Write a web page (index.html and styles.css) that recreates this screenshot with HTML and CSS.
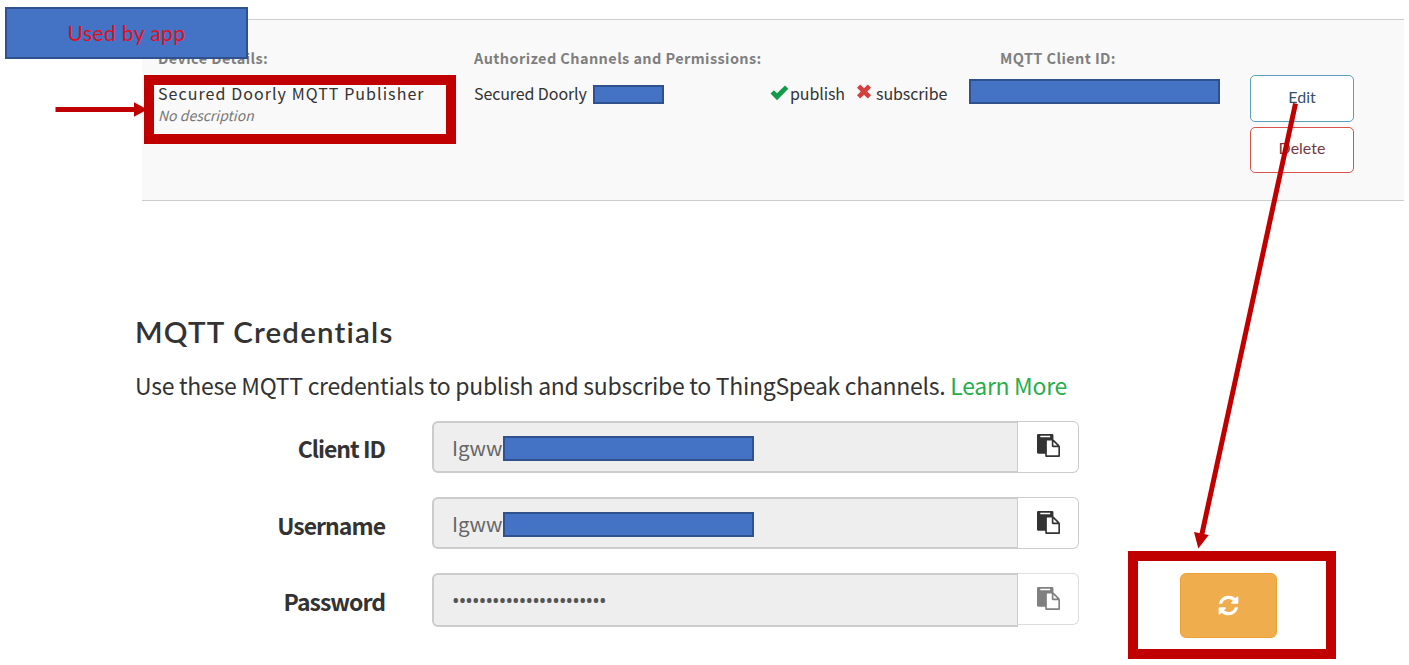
FILE: index.html
```html
<!DOCTYPE html>
<html lang="en">
<head>
<meta charset="utf-8">
<title>MQTT Credentials</title>
<link rel="stylesheet" href="styles.css">
</head>
<body>
<svg class="defs" aria-hidden="true">
  <symbol id="paste" viewBox="0 0 1792 1792"><path d="M768 1664h896v-640h-416q-40 0-68-28t-28-68v-416h-384v1152zm256-1440v-64q0-13-9.500-22.500t-22.500-9.500h-704q-13 0-22.500 9.500t-9.500 22.500v64q0 13 9.500 22.500t22.500 9.500h704q13 0 22.500-9.500t9.500-22.500zm256 672h299l-299-299v299zm512 128v672q0 40-28 68t-68 28h-960q-40 0-68-28t-28-68v-160h-544q-40 0-68-28t-28-68v-1344q0-40 28-68t68-28h1088q40 0 68 28t28 68v328q21 13 36 28l408 408q28 28 48 76t20 88z"/></symbol>
</svg>
<main class="page">
  <section class="device">
    <div class="details">
      <h2 class="col-title">Device Details:</h2>
      <p class="name">Secured Doorly MQTT Publisher</p>
      <p class="desc">No description</p>
    </div>
    <div class="channels">
      <h2 class="col-title">Authorized Channels and Permissions:</h2>
      <div class="perm-row">
        <span class="channel">Secured Doorly</span>
        <span class="mask mask-small"></span>
        <svg class="check" viewBox="0 0 19 16"><path d="M0.5 8.500 4 5.200 7 8.300 15 0.500 18.300 3.700 7 15.300z"/></svg>
        <span class="publish">publish</span>
        <svg class="cross" viewBox="0 0 16 16"><path d="M4 .5 8 4.500 12 .5 15.500 4 11.500 8 15.500 12 12 15.500 8 11.500 4 15.500 .5 12 4.500 8 .5 4z"/></svg>
        <span class="subscribe">subscribe</span>
      </div>
    </div>
    <div class="client">
      <h2 class="col-title client-title">MQTT Client ID:</h2>
      <span class="mask mask-client"></span>
    </div>
    <div class="actions">
      <button class="btn edit">Edit</button>
      <button class="btn delete">Delete</button>
    </div>
  </section>

  <section class="credentials">
    <h1 class="heading">MQTT Credentials</h1>
    <p class="intro"><span class="intro-text">Use these MQTT credentials to publish and subscribe to ThingSpeak channels.</span> <a class="link">Learn More</a></p>
    <div class="field first">
      <label class="label">Client ID</label>
      <div class="input"><span class="value">Igww</span><span class="mask mask-field"></span></div>
      <button class="copy"><svg class="icon"><use href="#paste"/></svg></button>
    </div>
    <div class="field">
      <label class="label">Username</label>
      <div class="input"><span class="value">Igww</span><span class="mask mask-field"></span></div>
      <button class="copy"><svg class="icon"><use href="#paste"/></svg></button>
    </div>
    <div class="field password">
      <label class="label">Password</label>
      <div class="input"><span class="dots">•••••••••••••••••••••••</span></div>
      <button class="copy disabled"><svg class="icon"><use href="#paste"/></svg></button>
    </div>
  </section>

  <div class="tag">Used by app</div>
  <div class="frame frame-device"></div>
  <div class="frame frame-refresh">
    <button class="refresh"><svg class="refresh-icon" viewBox="0 0 1792 1792"><path d="M1639 1056q0 5-1 7-64 268-268 434.500t-478 166.500q-146 0-282.500-55t-243.500-157l-129 129q-19 19-45 19t-45-19-19-45v-448q0-26 19-45t45-19h448q26 0 45 19t19 45-19 45l-137 137q71 66 161 102t187 36q134 0 250-65t186-179q11-17 53-117 8-23 30-23h192q13 0 22.500 9.500t9.500 22.500zm25-800v448q0 26-19 45t-45 19h-448q-26 0-45-19t-19-45 19-45l138-138q-148-137-349-137-134 0-250 65t-186 179q-11 17-53 117-8 23-30 23h-199q-13 0-22.500-9.500t-9.500-22.500v-7q65-268 270-434.500t480-166.500q146 0 284 55.500t245 156.500l130-129q19-19 45-19t45 19 19 45z"/></svg></button>
  </div>
  <svg class="arrows" viewBox="0 0 1409 665">
    <path class="shaft" d="M55.500 109.500H136M1295.500 103.500 1201.500 536"/>
    <path class="head" d="M134 102.300 147.500 109.500 134 116.700zM1194 532 1208.800 535 1198.300 548.500z"/>
  </svg>
</main>
</body>
</html>
```

FILE: styles.css
```css
* { box-sizing: border-box; }
body { margin: 0; background: #fff; color: #333; font-family: "Noto Sans CJK SC", "Noto Sans", sans-serif; }
h1, h2, p { margin: 0; }
button { padding: 0; font: inherit; }
.defs { position: absolute; width: 0; height: 0; }
.page { position: relative; width: 1409px; height: 665px; padding-top: 19px; overflow: hidden; }

.device {
  display: grid; grid-template-columns: 316px 495px 281px 104px;
  width: 1262px; height: 182px; margin-left: 142px; padding-left: 16px;
  background: #f9f9f9; border-top: 1px solid #ccc; border-bottom: 1px solid #ccc;
}
.details, .channels, .client { padding-top: 27px; }
.col-title { font-size: 14.500px; line-height: 22px; font-weight: 700; color: #7f7f7f; letter-spacing: .4px; white-space: nowrap; }
.name { margin-top: 13px; font-size: 16px; line-height: 22px; letter-spacing: 1.060px; white-space: nowrap; }
.desc { font-size: 14px; line-height: 22px; font-style: italic; color: #777; white-space: nowrap; }
.perm-row { display: flex; height: 22px; margin-top: 13px; font-size: 16px; line-height: 22px; letter-spacing: -.1px; white-space: nowrap; }
.channel { width: 119px; }
.mask { display: block; flex: none; background: #4472c4; border: 2px solid #2f528f; }
.mask-small { width: 71px; height: 19px; margin-top: 3px; }
.check { width: 19px; height: 16px; margin: 3px 1px 0 106px; fill: #149a4a; }
.publish { width: 67px; }
.cross { width: 16px; height: 15px; margin: 2px 3px 0 -1px; fill: #d43f3f; }
.subscribe { margin-left: 1px; }
.client-title { margin-left: 31px; }
.mask-client { width: 251px; height: 25px; margin-top: 10px; }
.actions { display: flex; flex-direction: column; gap: 5px; padding-top: 55px; }
.btn { height: 46.500px; padding-bottom: 4px; background: #fff; border: 1px solid #5aa0bd; border-radius: 5px; font-family: Lato, sans-serif; font-size: 16px; color: #34506f; }
.delete { border-color: #d9534f; color: #78383d; }

.credentials { padding: 111px 0 0 135px; }
.heading { font-family: Lato, sans-serif; font-size: 29.500px; line-height: 40px; font-weight: 600; color: #333; letter-spacing: 1.200px; white-space: nowrap; }
.intro { height: 35px; margin: 16px 0 18px; font-size: 23px; line-height: 35px; letter-spacing: -.29px; white-space: nowrap; }
.link { color: #27ae4b; }
.field { display: flex; width: 944px; height: 52px; margin-bottom: 24px; }
.label { width: 250px; margin-right: 47px; padding-top: 11px; text-align: right; font-size: 23px; line-height: 34px; font-weight: 700; letter-spacing: -1px; }
.first .label { padding-top: 10px; }
.input { display: flex; width: 586px; padding-left: 18px; background: #eee; border: 2px solid #ccc; border-radius: 6px 0 0 6px; border-right-width: 1px; }
.value { width: 51px; padding-top: 8px; font-size: 20.500px; line-height: 32px; color: #666; }
.mask-field { width: 251px; height: 25px; margin-top: 13px; }
.copy { width: 61px; padding: 13px 0 0 1px; background: #fff; border: 1px solid #ccc; border-left: 0; border-radius: 0 6px 6px 0; display: flex; justify-content: center; }
.first .copy { padding-top: 12px; }
.icon { width: 23px; height: 23px; fill: #333; }
.password .input { height: 54px; }
.disabled { border-color: #ddd; }
.disabled .icon { fill: #808080; }
.dots { padding-top: 10px; font-family: "Noto Sans", sans-serif; font-size: 20px; line-height: 32px; letter-spacing: -.84px; color: #555; }

.tag { position: absolute; left: 5px; top: 7px; width: 243px; height: 52px; background: #4472c4; border: 2px solid #2f528f; color: #e01020; text-align: center; font-family: Lato, sans-serif; font-size: 21px; line-height: 48px; letter-spacing: .4px; }
.frame { position: absolute; border: 10px solid #c00000; }
.frame-device { left: 144px; top: 75px; width: 312px; height: 69px; }
.frame-refresh { left: 1128px; top: 551px; width: 208px; height: 108px; padding: 12px 0 0 42px; background: #fff; }
.refresh { display: flex; align-items: center; justify-content: center; width: 97px; height: 65px; padding-bottom: 1px; background: #f0ad4e; border: 1px solid #eea236; border-radius: 6px; }
.refresh-icon { width: 23px; height: 23px; fill: #fff; }
.arrows { position: absolute; left: 0; top: 0; width: 1409px; height: 665px; }
.shaft { fill: none; stroke: #c00000; stroke-width: 5; }
.head { fill: #c00000; }
```
